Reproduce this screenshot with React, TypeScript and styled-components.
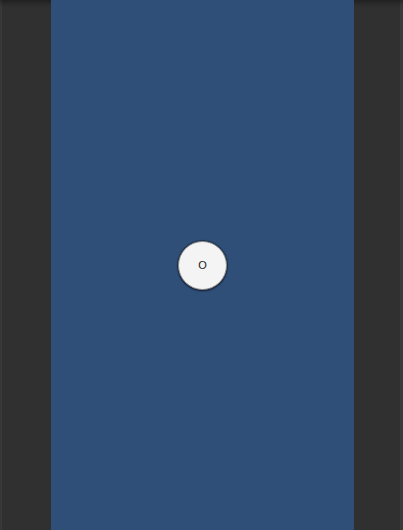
import styled, { createGlobalStyle } from 'styled-components';

const GlobalStyle = createGlobalStyle`
  html, body {
    margin: 0;
    padding: 0;
    height: 100%;
    background: #303030;
    font-family: "Liberation Sans", Arial, sans-serif;
  }
`;

const Page = styled.div`
  height: 100vh;
  display: flex;
  justify-content: center;
  background: #303030;
  box-shadow: inset 0 6px 6px -4px rgba(0, 0, 0, 0.45), inset 2px 0 0 #3a3a3a, inset -3px 0 0 #3c3c3c;
  padding-left: 2px;
  box-sizing: border-box;
`;

const Column = styled.main`
  width: 303px;
  height: 100%;
  background: #2f4f78;
  display: flex;
  align-items: center;
  justify-content: center;
`;

const RoundButton = styled.button`
  width: 49px;
  height: 49px;
  border-radius: 50%;
  border: 1px solid #8a8a8a;
  background: #f4f4f4;
  box-shadow: 0 0 1px 1px rgba(0, 0, 0, 0.35), 0 1px 2px rgba(0, 0, 0, 0.4);
  color: #222;
  font-family: "Liberation Sans", Arial, sans-serif;
  font-size: 11px;
  padding: 0;
  cursor: pointer;
  display: flex;
  align-items: center;
  justify-content: center;
`;

const App = () => {
  return (
    <>
      <GlobalStyle />
      <Page>
        <Column>
          <RoundButton type="button">O</RoundButton>
        </Column>
      </Page>
    </>
  );
};

export default App;
